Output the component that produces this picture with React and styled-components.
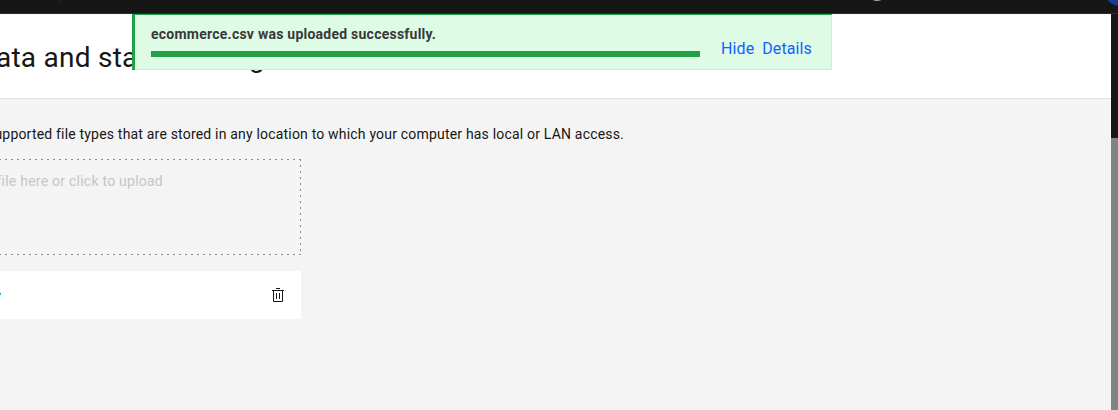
import React from "react";
import styled, { createGlobalStyle } from "styled-components";

const GlobalStyle = createGlobalStyle`
  *, *::before, *::after { box-sizing: border-box; }
  body {
    margin: 0;
    background: #f4f4f4;
    color: #161616;
    font-family: Roboto, "Liberation Sans", sans-serif;
    overflow: hidden;
  }
`;

const Page = styled.div`
  position: relative;
  display: flex;
  flex-direction: column;
  width: 1118px;
  height: 410px;
  overflow: hidden;
  background: #f4f4f4;
`;

const TopBar = styled.header`
  position: relative;
  flex: 0 0 14px;
  overflow: hidden;
  background: #161616;
  border-bottom: 1px solid #2c2c2c;
`;

const Avatar = styled.span`
  position: absolute;
  top: -26px;
  right: -18px;
  width: 32px;
  height: 32px;
  border-radius: 50%;
  background: #153d93;
`;

const HeaderIcon = styled.svg`
  position: absolute;
  top: -19px;
  left: 867px;
`;

const HeaderDivider = styled.span`
  position: absolute;
  top: 0;
  left: 59px;
  width: 1px;
  height: 2px;
  background: #2a2a2a;
`;

const Body = styled.div`
  display: flex;
  flex: 1;
  min-height: 0;
`;

const Main = styled.main`
  flex: 1;
  min-width: 0;
`;

const TitleBar = styled.div`
  height: 85px;
  padding-top: 26px;
  background: #fff;
  border-bottom: 1px solid #e0e0e0;
`;

const ClippedLine = styled.div`
  display: flex;
  justify-content: flex-end;
  width: ${(p) => p.$width}px;
  overflow: hidden;
  white-space: nowrap;
`;

const Title = styled.h1`
  margin: 0;
  font-size: 28px;
  font-weight: 400;
  line-height: 36px;
  letter-spacing: 0.25px;
`;

const Content = styled.section`
  padding-top: 25px;
`;

const Description = styled.p`
  margin: 0;
  font-size: 14px;
  line-height: 20px;
  letter-spacing: 0.19px;
`;

const DropZone = styled.div`
  width: 301px;
  height: 96px;
  margin-top: 15px;
  padding-top: 12px;
  color: #c6c6c6;
  --dot: #8d8d8d 0 2px, transparent 2px 6px;
  background:
    repeating-linear-gradient(90deg, var(--dot)) -1px 0 / 302px 1px no-repeat,
    repeating-linear-gradient(90deg, var(--dot)) -1px 95px / 302px 1px no-repeat,
    repeating-linear-gradient(180deg, var(--dot)) 300px 0 / 1px 96px no-repeat;
`;

const Hint = styled.span`
  font-size: 14px;
  line-height: 20px;
  letter-spacing: 0.24px;
`;

const FileRow = styled.div`
  display: flex;
  align-items: center;
  justify-content: space-between;
  width: 301px;
  height: 48px;
  margin-top: 16px;
  padding-right: 15px;
  background: #fff;
`;

const FileName = styled.a`
  padding-top: 2px;
  color: #0043ce;
  font-size: 14px;
  line-height: 18px;
`;

const IconButton = styled.button`
  display: flex;
  padding: 0;
  border: 0;
  background: none;
  color: #161616;
`;

const ScrollTrack = styled.aside`
  flex: 0 0 7px;
  background: #7f8487;
`;

const ScrollThumb = styled.div`
  height: 124px;
  background: #161616;
`;

const Notification = styled.div`
  position: absolute;
  top: 14px;
  left: 132px;
  display: flex;
  width: 700px;
  height: 56px;
  padding-left: 16px;
  background: #defbe6;
  border-left: 3px solid #24a148;
  border-top: 1px solid #24a148;
  box-shadow: inset -1px -1px 0 #d5e6da;
`;

const Upload = styled.div`
  flex: 0 0 549px;
  padding-top: 9px;
`;

const Message = styled.div`
  color: #393939;
  font-size: 14px;
  font-weight: 700;
  line-height: 20px;
  letter-spacing: 0.24px;
  white-space: nowrap;
`;

const Progress = styled.div`
  height: 6px;
  margin-top: 7px;
  background: #24a148;
`;

const Actions = styled.nav`
  display: flex;
  gap: 8px;
  padding: 23px 0 0 21px;
`;

const Action = styled.a`
  color: #0f62fe;
  font-size: 16px;
  line-height: 22px;
  letter-spacing: 0.1px;
`;

const TrashIcon = () => (
  <svg width="16" height="16" viewBox="0 0 32 32" fill="currentColor" aria-hidden="true">
    <path d="M12 12h2v12h-2zM18 12h2v12h-2z" />
    <path d="M4 6v2h2v20a2 2 0 0 0 2 2h16a2 2 0 0 0 2-2V8h2V6zM8 28V8h16v20z" />
    <path d="M12 2h8v2h-8z" />
  </svg>
);

export default function App() {
  return (
    <Page>
      <GlobalStyle />
      <TopBar>
        <HeaderDivider />
        <HeaderIcon width="20" height="20" viewBox="0 0 20 20" aria-hidden="true">
          <circle cx="10" cy="10" r="9.5" fill="none" stroke="#b8b8b8" />
        </HeaderIcon>
        <Avatar />
      </TopBar>
      <Body>
        <Main>
          <TitleBar>
            <ClippedLine $width={265}>
              <Title>Upload data and start working</Title>
            </ClippedLine>
          </TitleBar>
          <Content>
            <ClippedLine $width={624}>
              <Description>
                Select supported file types that are stored in any location to which your computer
                has local or LAN access.
              </Description>
            </ClippedLine>
            <DropZone>
              <ClippedLine $width={163}>
                <Hint>Drop file here or click to upload</Hint>
              </ClippedLine>
            </DropZone>
            <FileRow>
              <ClippedLine $width={1}>
                <FileName>ecommerce.csv</FileName>
              </ClippedLine>
              <IconButton aria-label="Delete file">
                <TrashIcon />
              </IconButton>
            </FileRow>
          </Content>
        </Main>
        <ScrollTrack>
          <ScrollThumb />
        </ScrollTrack>
      </Body>
      <Notification>
        <Upload>
          <Message>ecommerce.csv was uploaded successfully.</Message>
          <Progress />
        </Upload>
        <Actions>
          <Action>Hide</Action>
          <Action>Details</Action>
        </Actions>
      </Notification>
    </Page>
  );
}
